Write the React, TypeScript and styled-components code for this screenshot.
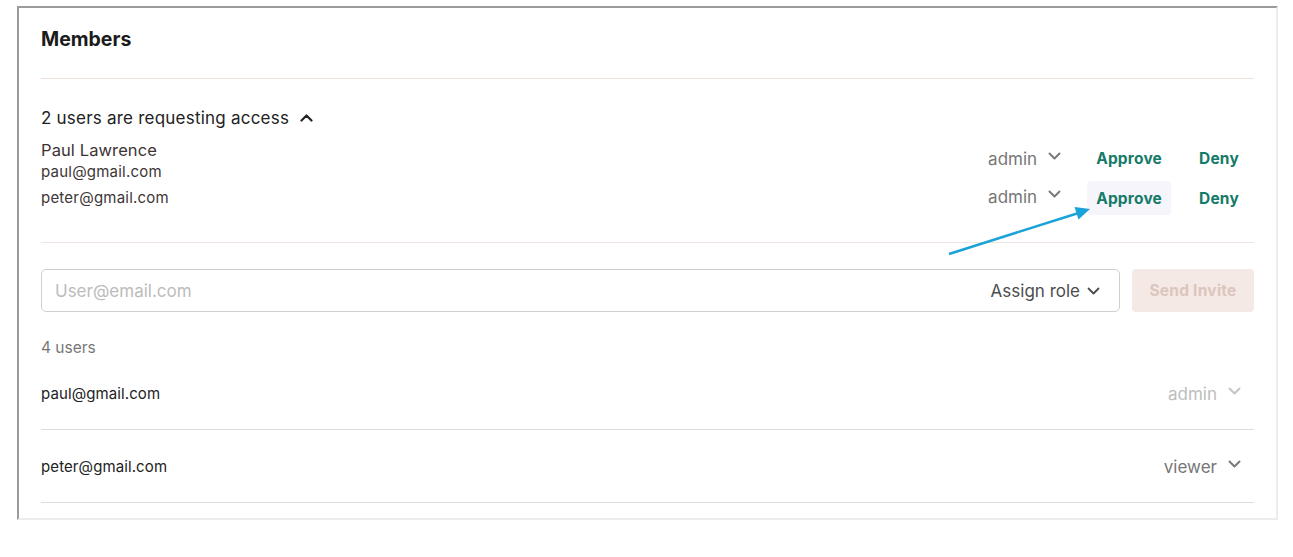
import React from "react";
import styled, { createGlobalStyle } from "styled-components";

const GlobalStyle = createGlobalStyle`
  html, body { margin: 0; padding: 0; background: #ffffff; }
  body { font-family: Inter, "Noto Sans", "Liberation Sans", sans-serif; }
  * { box-sizing: border-box; }
`;

const Page = styled.div`
  position: relative;
  width: 1293px;
  height: 557px;
  padding: 6px 0 0 17px;
`;

const Card = styled.section`
  width: 1261px;
  height: 514px;
  border-style: solid;
  border-width: 2px;
  border-color: #9b9b9b #ececec #ececec #9b9b9b;
  padding: 0 22px;
  display: flex;
  flex-direction: column;
`;

const Header = styled.header`
  padding: 20px 0 28px;
  border-bottom: 1px solid #f2dfdc;
`;

const Title = styled.h2`
  margin: 0;
  font-size: 19.5px;
  line-height: 22px;
  font-weight: 700;
  color: #1b1b1b;
`;

const Requests = styled.div`
  padding: 29px 0 27px;
  border-bottom: 1px solid #efe4df;
`;

const RequestTitle = styled.button`
  display: flex;
  align-items: center;
  gap: 11px;
  padding: 0;
  border: 0;
  background: none;
  font: inherit;
  font-size: 17px;
  letter-spacing: 0.22px;
  line-height: 20px;
  color: #222222;
  margin-bottom: 12px;
`;

const RequestRow = styled.div`
  display: flex;
  align-items: center;
  justify-content: space-between;
  min-height: 34px;
`;

const Person = styled.div`
  display: flex;
  flex-direction: column;
  gap: 3px;
`;

const Name = styled.span`
  font-size: 16.5px;
  letter-spacing: 0.1px;
  line-height: 20px;
  color: #3d3333;
`;

const Email = styled.span<{ $dark?: boolean }>`
  font-size: 15px;
  letter-spacing: ${(p) => (p.$dark ? "0.1px" : "0.22px")};
  line-height: 18px;
  color: ${(p) => (p.$dark ? "#222222" : "#3d3535")};
`;

const Actions = styled.div`
  display: flex;
  align-items: center;
  padding-right: 6px;
`;

const RoleSelect = styled.div<{ $tone: "muted" | "faint" }>`
  display: flex;
  align-items: center;
  gap: 11px;
  font-size: 17px;
  line-height: 20px;
  color: ${(p) => (p.$tone === "faint" ? "#bdbdbd" : "#767676")};
  svg {
    margin-bottom: 6px;
  }
`;

const RequestRole = styled(RoleSelect)`
  margin-right: 26px;
  margin-top: -3px;
`;

const ActionButton = styled.button<{ $active?: boolean }>`
  height: 34px;
  padding: 0 9px;
  border: 0;
  border-radius: 4px;
  background: ${(p) => (p.$active ? "#f5f5fb" : "transparent")};
  font: inherit;
  font-size: 15.5px;
  font-weight: 700;
  letter-spacing: 0.2px;
  color: #167a68;
  & + & {
    margin-left: 19px;
  }
`;

const FirstActionButton = styled(ActionButton)`
  margin-top: -4px;
`;

const Invite = styled.div`
  padding-top: 26px;
`;

const InviteRow = styled.div`
  display: flex;
  gap: 12px;
  height: 43px;
`;

const InputBox = styled.div`
  flex: 1;
  display: flex;
  align-items: center;
  border: 1px solid #cfcfcf;
  border-radius: 5px;
  padding: 0 19px 0 13px;
`;

const EmailInput = styled.input`
  flex: 1;
  border: 0;
  outline: none;
  background: transparent;
  font: inherit;
  font-size: 17px;
  color: #222;
  padding: 0;
  &::placeholder {
    color: #bcbcbc;
  }
`;

const AssignRole = styled.div`
  display: flex;
  align-items: center;
  gap: 7px;
  font-size: 17px;
  color: #4d4d4d;
`;

const SendButton = styled.button`
  width: 122px;
  border: 0;
  border-radius: 4px;
  background: #f4e9e5;
  color: #dcc5bd;
  font: inherit;
  font-size: 15.5px;
  font-weight: 700;
  letter-spacing: 0.25px;
`;

const UsersCount = styled.div`
  margin-top: 27px;
  font-size: 15.5px;
  line-height: 18px;
  color: #777777;
`;

const MemberRow = styled.div`
  height: 73px;
  display: flex;
  align-items: center;
  justify-content: space-between;
  border-bottom: 1px solid #dedede;
  padding: 2px 13px 0 0;
`;

const Overlay = styled.svg`
  position: absolute;
  left: 0;
  top: 0;
  pointer-events: none;
`;

const Chevron = ({ color, up, sw = 2 }: { color: string; up?: boolean; sw?: number }) => (
  <svg width={13} height={8} viewBox="0 0 13 8" fill="none">
    <path
      d={up ? "M1.5 6.5 L6.5 1.5 L11.5 6.5" : "M1.5 1.5 L6.5 6.5 L11.5 1.5"}
      stroke={color}
      strokeWidth={sw}
      strokeLinecap="round"
      strokeLinejoin="round"
    />
  </svg>
);

const requests = [
  { name: "Paul Lawrence", email: "paul@gmail.com", role: "admin" },
  { name: "", email: "peter@gmail.com", role: "admin", active: true },
];

const members: { email: string; role: string; tone: "faint" | "muted" }[] = [
  { email: "paul@gmail.com", role: "admin", tone: "faint" },
  { email: "peter@gmail.com", role: "viewer", tone: "muted" },
];

export default function App() {
  return (
    <>
      <GlobalStyle />
      <Page>
        <Card>
          <Header>
            <Title>Members</Title>
          </Header>
          <Requests>
            <RequestTitle>
              2 users are requesting access
              <Chevron color="#222" up sw={2.2} />
            </RequestTitle>
            {requests.map((r, i) => {
              const Btn = i === 0 ? FirstActionButton : ActionButton;
              return (
                <RequestRow key={r.email}>
                  <Person>
                    {r.name && <Name>{r.name}</Name>}
                    <Email>{r.email}</Email>
                  </Person>
                  <Actions>
                    <RequestRole $tone="muted">
                      {r.role}
                      <Chevron color="#7a7a7a" />
                    </RequestRole>
                    <Btn $active={r.active}>Approve</Btn>
                    <Btn>Deny</Btn>
                  </Actions>
                </RequestRow>
              );
            })}
          </Requests>
          <Invite>
            <InviteRow>
              <InputBox>
                <EmailInput placeholder="User@email.com" />
                <AssignRole>
                  Assign role
                  <Chevron color="#4d4d4d" sw={1.8} />
                </AssignRole>
              </InputBox>
              <SendButton>Send Invite</SendButton>
            </InviteRow>
            <UsersCount>4 users</UsersCount>
            {members.map((m) => (
              <MemberRow key={m.email}>
                <Email $dark>{m.email}</Email>
                <RoleSelect $tone={m.tone}>
                  {m.role}
                  <Chevron color={m.tone === "faint" ? "#c6c6c6" : "#7a7a7a"} />
                </RoleSelect>
              </MemberRow>
            ))}
          </Invite>
        </Card>
        <Overlay width={1293} height={557} viewBox="0 0 1293 557">
          <line x1={949} y1={254} x2={1077} y2={213.5} stroke="#1aa3d9" strokeWidth={2.5} />
          <polygon points="1090,209 1078.5,219.5 1074.5,207" fill="#1aa3d9" />
        </Overlay>
      </Page>
    </>
  );
}
